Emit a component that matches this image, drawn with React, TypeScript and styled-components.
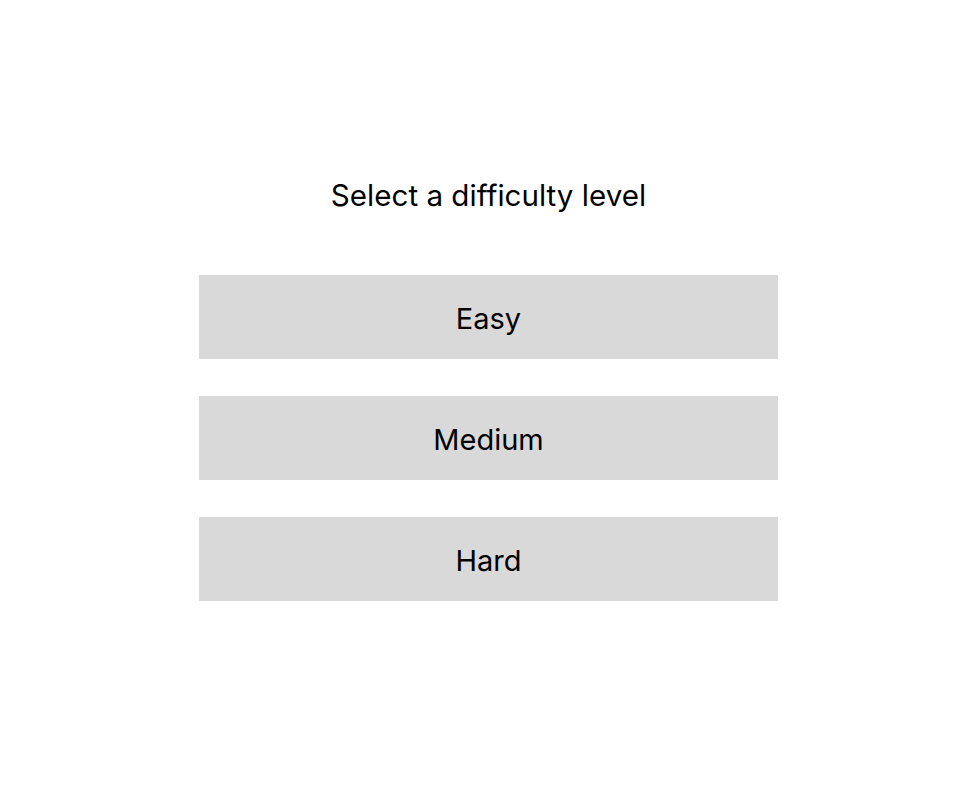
import styled, { createGlobalStyle } from "styled-components";

const levels = ["Easy", "Medium", "Hard"];

const GlobalStyle = createGlobalStyle`
  body {
    margin: 0;
    background: #ffffff;
    font-family: Inter, "Noto Sans", sans-serif;
  }
`;

const Page = styled.div`
  width: 977px;
  min-height: 788px;
  display: flex;
  flex-direction: column;
  align-items: center;
  padding-top: 174px;
  box-sizing: border-box;
`;

const Title = styled.h1`
  margin: 0 0 59px;
  font-size: 29.6px;
  font-weight: 400;
  line-height: 42px;
  color: #000000;
`;

const List = styled.div`
  display: flex;
  flex-direction: column;
  gap: 37px;
  width: 579px;
`;

const LevelButton = styled.button`
  height: 84px;
  border: none;
  padding: 2px 0 0;
  background: #d9d9d9;
  font-family: Inter, "Noto Sans", sans-serif;
  font-size: 29px;
  color: #000000;
  cursor: pointer;
`;

const App = () => {
  return (
    <>
      <GlobalStyle />
      <Page>
        <Title>Select a difficulty level</Title>
        <List>
          {levels.map((level) => (
            <LevelButton key={level}>{level}</LevelButton>
          ))}
        </List>
      </Page>
    </>
  );
};

export default App;
